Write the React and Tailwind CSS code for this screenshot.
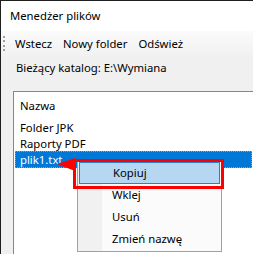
export default function App() {
  const font = { fontFamily: '"Noto Sans", "Open Sans", sans-serif' };
  return (
    <div
      style={font}
      className="relative flex h-[254px] w-[253px] flex-col overflow-hidden border-l border-t border-[#1f1f1f] bg-[#f0f0f0] text-[11.3px] leading-none text-black"
    >
      {/* title bar */}
      <div className="flex h-[30px] items-center bg-white pl-[9px]">Menedżer plików</div>

      {/* toolbar */}
      <div className="flex h-[25px] items-center bg-gradient-to-b from-[#fbfbfb] to-[#f1f1f1]">
        <div className="ml-[2px] flex h-[15px] flex-col justify-between">
          {[0, 1, 2, 3].map((i) => (
            <span key={i} className="block h-[2px] w-[2px] bg-[#a0a0a0]" />
          ))}
        </div>
        <div className="ml-[10px] flex items-center gap-[11px]">
          <span>Wstecz</span>
          <span>Nowy folder</span>
          <span>Odśwież</span>
        </div>
      </div>

      <div className="flex h-[24px] items-center pl-[15px]">Bieżący katalog: E:\Wymiana</div>

      {/* list box */}
      <div className="relative ml-[12px] mt-[11px] flex-1 border-l border-t border-[#828790] bg-white">
        <div className="flex h-[24px] items-center pl-[6px] pt-[4px]">Nazwa</div>
        <div className="mt-[4px] flex h-[16px] items-center pl-[6px]">Folder JPK</div>
        <div className="flex h-[16px] items-center pl-[6px]">Raporty PDF</div>
        <div className="mx-[1px] -mt-[1px] flex h-[17px] items-center border border-dotted border-[#e0903a] bg-[#0078d7] pl-[4px] text-white">
          plik1.txt
        </div>

        {/* arrow */}
        <svg className="absolute left-[43px] top-[66px]" width="20" height="14" viewBox="0 0 20 14">
          <polygon points="0,6 18,0 18,13" fill="#ff0000" />
        </svg>

        {/* context menu */}
        <div className="absolute left-[63px] top-[68px] flex w-[145px] flex-col border border-[#a0a0a0] bg-[#fbfbfb] py-[1px]">
          <div className="absolute bottom-0 left-0 top-0 w-[24px] bg-[#f1f1f1]" />
          {["Kopiuj", "Wklej", "Usuń", "Zmień nazwę"].map((label, i) => (
            <div
              key={label}
              className={`relative mx-[1px] flex h-[22px] items-center pl-[33px] ${
                i === 0 ? "border border-[#2d7fd1] bg-[#b6d7f2] pl-[32px]" : ""
              }`}
            >
              {label}
            </div>
          ))}
        </div>

        {/* red highlight frame */}
        <div className="absolute left-[59px] top-[67px] h-[30px] w-[151px] border-[3px] border-[#ff0000]" />
      </div>
    </div>
  );
}
